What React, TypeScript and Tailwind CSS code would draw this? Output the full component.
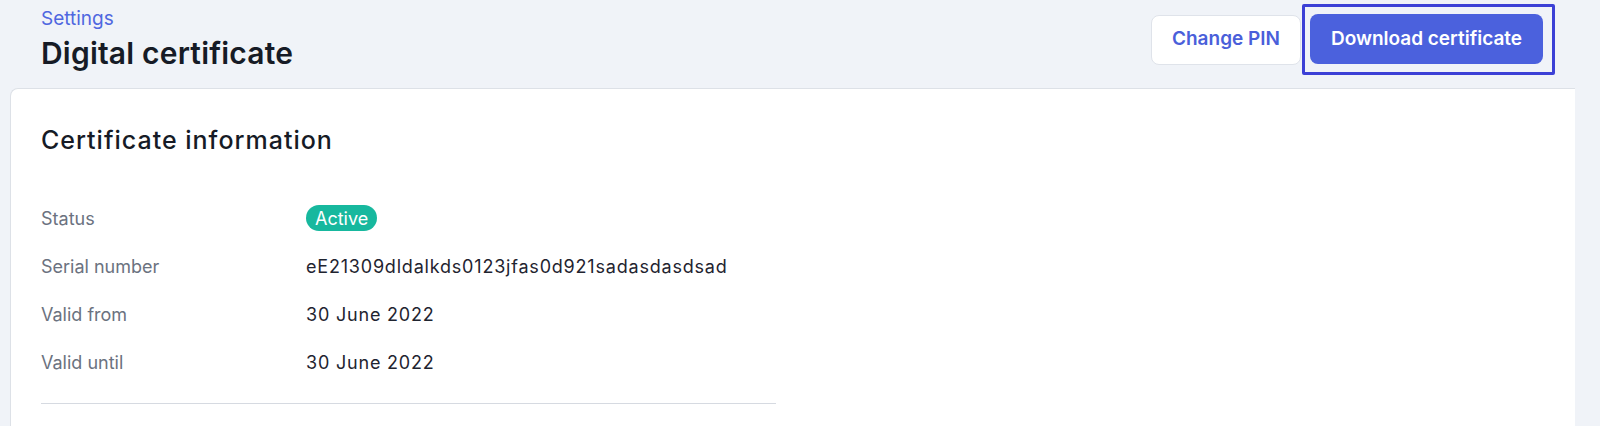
export default function App() {
  const rows = [
    { label: 'Serial number', value: 'eE21309dldalkds0123jfas0d921sadasdasdsad' },
    { label: 'Valid from', value: '30 June 2022' },
    { label: 'Valid until', value: '30 June 2022' },
  ];

  return (
    <div className="min-h-screen bg-[#f0f3f8] font-['Inter',sans-serif]">
      {/* header */}
      <div className="flex justify-between items-start pl-[41px] pr-[45px] pt-[4px]">
        <div className="pt-[4px]">
          <div className="text-[19px] leading-[22px] text-[#4f67e0]">Settings</div>
          <h1 className="mt-[6px] text-[30px] leading-[34px] font-semibold tracking-[0.2px] text-[#161b26]">Digital certificate</h1>
        </div>
        <div className="flex items-center">
          <button className="w-[150px] h-[50px] bg-white border border-[#dfe3ea] rounded-[8px] text-[19px] font-semibold text-[#4a5fda]">
            Change PIN
          </button>
          <div className="ml-[1px] border-[3px] border-[#3c40d6] rounded-[2px] pl-[5px] pr-[9px] pt-[7px] pb-[8px]">
            <button className="w-[233px] h-[50px] bg-[#4b61dd] rounded-[8px] text-[19px] font-semibold text-white">
              Download certificate
            </button>
          </div>
        </div>
      </div>

      {/* card */}
      <div className="ml-[10px] mr-[25px] mt-[13px] bg-white border-l border-t border-[#dde1e7] rounded-tl-[8px] pl-[30px] pt-[35px] pb-[30px]">
        <h2 className="text-[25px] leading-[32px] font-medium tracking-[1px] text-[#161b26]">Certificate information</h2>
        <div className="mt-[38px] w-[735px]">
          <div className="flex items-center h-[48px]">
            <div className="w-[265px] text-[18px] text-[#6b7280]">Status</div>
            <span className="inline-flex items-center justify-center h-[26px] px-[9px] rounded-full bg-[#17b89e] text-white text-[18px]">
              Active
            </span>
          </div>
          {rows.map((r) => (
            <div key={r.label} className="flex items-center h-[48px]">
              <div className="w-[265px] text-[18px] text-[#6b7280]">{r.label}</div>
              <div className="text-[18px] tracking-[0.8px] text-[#1f2430]">{r.value}</div>
            </div>
          ))}
          <div className="mt-[17px] h-px bg-[#d6dae1]" />
        </div>
      </div>
    </div>
  );
}
